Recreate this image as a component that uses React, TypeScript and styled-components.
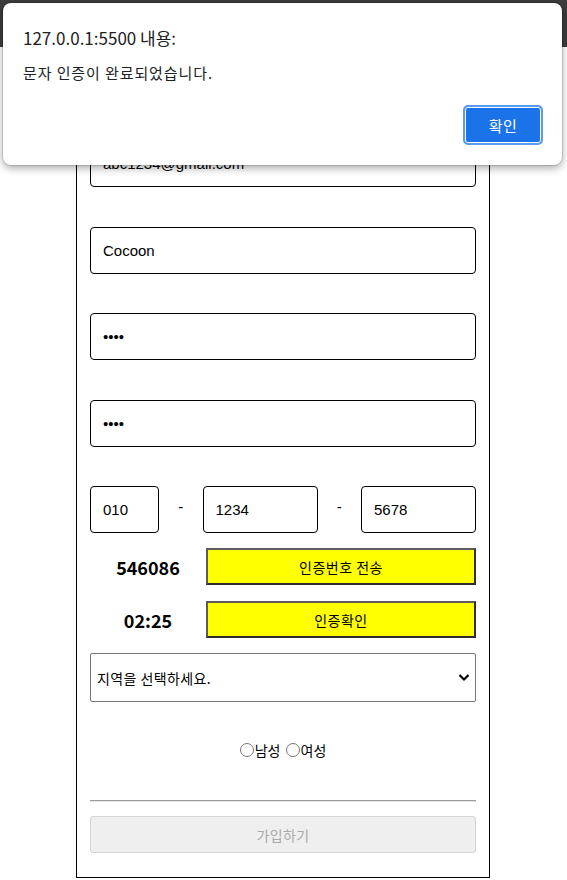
import React from "react";
import styled, { createGlobalStyle } from "styled-components";

const GlobalStyle = createGlobalStyle`
  html, body { margin: 0; padding: 0; background: #fff; }
  body { font-family: "Liberation Sans", "Noto Sans CJK KR", sans-serif; color: #000; }
  * { box-sizing: border-box; }
`;

const TopBar = styled.div`
  height: 47px;
  background: #3c3c3c;
`;

const Card = styled.form`
  width: 414px;
  margin: 20px 0 0 76px;
  border: 1px solid #000;
  padding: 72px 13px 24px;
  display: flex;
  flex-direction: column;
`;

const TextInput = styled.input`
  display: block;
  width: 100%;
  height: 47px;
  margin: 0 0 39.5px;
  padding: 0 12px;
  border: 1px solid #000;
  border-radius: 4px;
  font-family: "Liberation Sans", "Noto Sans CJK KR", sans-serif;
  font-size: 15px;
  color: #000;
  background: #fff;
  outline: none;
`;

const PhoneRow = styled.div`
  display: flex;
  align-items: center;
  height: 47px;
`;

const PhoneInput = styled.input<{ $w: number }>`
  width: ${(p) => p.$w}px;
  height: 47px;
  padding: 0 12px;
  border: 1px solid #000;
  border-radius: 4px;
  font-family: "Liberation Sans", "Noto Sans CJK KR", sans-serif;
  font-size: 15px;
  color: #000;
  outline: none;
`;

const Dash = styled.span`
  flex: 1;
  text-align: center;
  font-size: 15px;
  padding-bottom: 6px;
`;

const AuthRow = styled.div<{ $mt: number }>`
  display: flex;
  align-items: center;
  margin-top: ${(p) => p.$mt}px;
`;

const AuthValue = styled.span`
  width: 116px;
  text-align: center;
  font-family: "Noto Sans CJK KR", sans-serif;
  font-weight: 700;
  font-size: 18px;
`;

const YellowButton = styled.button`
  flex: 1;
  height: 37px;
  background: #ffff00;
  border: 2px solid;
  border-color: #5c5c5c #2e2e2e #2e2e2e #5c5c5c;
  font-family: "Noto Sans CJK KR", sans-serif;
  font-size: 14px;
  letter-spacing: 0.5px;
  color: #000;
  padding: 0;
`;

const SelectWrap = styled.div`
  position: relative;
  margin-top: 15px;
  height: 49px;
`;

const Select = styled.select`
  appearance: none;
  width: 100%;
  height: 49px;
  border: 1px solid #767676;
  border-radius: 2px;
  background: #fff;
  padding: 0 30px 0 6px;
  font-family: "Noto Sans CJK KR", sans-serif;
  font-size: 14px;
  letter-spacing: 0.4px;
  color: #000;
  outline: none;
`;

const Chevron = styled.svg`
  position: absolute;
  right: 6px;
  top: 20px;
  pointer-events: none;
`;

const GenderRow = styled.div`
  margin-top: 37px;
  height: 22px;
  display: flex;
  justify-content: center;
  align-items: center;
  gap: 5px;
  font-family: "Noto Sans CJK KR", sans-serif;
  font-size: 14px;
`;

const RadioLabel = styled.label`
  display: inline-flex;
  align-items: center;
`;

const Radio = styled.input`
  appearance: none;
  flex-shrink: 0;
  width: 14px;
  height: 14px;
  margin: 0 1px 0 0;
  border: 1px solid #767676;
  border-radius: 50%;
  background: #fff;
`;

const Divider = styled.hr`
  width: 100%;
  margin: 39px 0 0;
  border: 0;
  border-top: 1px solid #9a9a9a;
  border-bottom: 1px solid #e6e6e6;
`;

const SubmitButton = styled.button`
  margin-top: 14px;
  height: 37px;
  width: 100%;
  background: #efefef;
  border: 1px solid #d4d4d4;
  border-radius: 3px;
  font-family: "Noto Sans CJK KR", sans-serif;
  font-size: 14px;
  letter-spacing: 0.4px;
  color: #a9a9a9;
`;

const Dialog = styled.div`
  position: absolute;
  top: 3px;
  left: 3px;
  width: 559px;
  height: 162px;
  background: #fff;
  border-radius: 8px;
  box-shadow: 0 0 0 1px rgba(0, 0, 0, 0.12), 0 3px 8px rgba(0, 0, 0, 0.35);
  padding: 22px 19px 20px 20px;
  display: flex;
  flex-direction: column;
  font-family: "Noto Sans CJK KR", sans-serif;
`;

const DialogTitle = styled.div`
  font-size: 17px;
  line-height: 26px;
  color: #202124;
`;

const DialogMessage = styled.div`
  margin-top: 11px;
  font-size: 15px;
  line-height: 22px;
  letter-spacing: 0.9px;
  color: #202124;
`;

const DialogActions = styled.div`
  margin-top: auto;
  display: flex;
  justify-content: flex-end;
`;

const OkButton = styled.button`
  width: 80px;
  height: 40px;
  border: 2px solid #5a9af2;
  border-radius: 5px;
  box-shadow: inset 0 0 0 1px #fff;
  background: #1a73e8;
  color: #fff;
  font-family: "Noto Sans CJK KR", sans-serif;
  font-size: 15px;
  letter-spacing: 0.5px;
  padding: 0;
`;

export default function App() {
  return (
    <>
      <GlobalStyle />
      <TopBar />
      <Card onSubmit={(e) => e.preventDefault()}>
        <TextInput type="email" defaultValue="abc1234@gmail.com" />
        <TextInput type="text" defaultValue="Cocoon" />
        <TextInput type="password" defaultValue="1234" />
        <TextInput type="password" defaultValue="1234" />
        <PhoneRow>
          <PhoneInput $w={69} defaultValue="010" />
          <Dash>-</Dash>
          <PhoneInput $w={115} defaultValue="1234" />
          <Dash>-</Dash>
          <PhoneInput $w={115} defaultValue="5678" />
        </PhoneRow>
        <AuthRow $mt={15}>
          <AuthValue>546086</AuthValue>
          <YellowButton type="button">인증번호 전송</YellowButton>
        </AuthRow>
        <AuthRow $mt={16}>
          <AuthValue>02:25</AuthValue>
          <YellowButton type="button">인증확인</YellowButton>
        </AuthRow>
        <SelectWrap>
          <Select defaultValue="">
            <option value="">지역을 선택하세요.</option>
          </Select>
          <Chevron width="12" height="9" viewBox="0 0 12 9">
            <path d="M1.5 2 L6 6.5 L10.5 2" fill="none" stroke="#000" strokeWidth="2.2" />
          </Chevron>
        </SelectWrap>
        <GenderRow>
          <RadioLabel>
            <Radio type="radio" name="gender" />
            남성
          </RadioLabel>
          <RadioLabel>
            <Radio type="radio" name="gender" />
            여성
          </RadioLabel>
        </GenderRow>
        <Divider />
        <SubmitButton type="submit" disabled>
          가입하기
        </SubmitButton>
      </Card>
      <Dialog>
        <DialogTitle>127.0.0.1:5500 내용:</DialogTitle>
        <DialogMessage>문자 인증이 완료되었습니다.</DialogMessage>
        <DialogActions>
          <OkButton type="button">확인</OkButton>
        </DialogActions>
      </Dialog>
    </>
  );
}
